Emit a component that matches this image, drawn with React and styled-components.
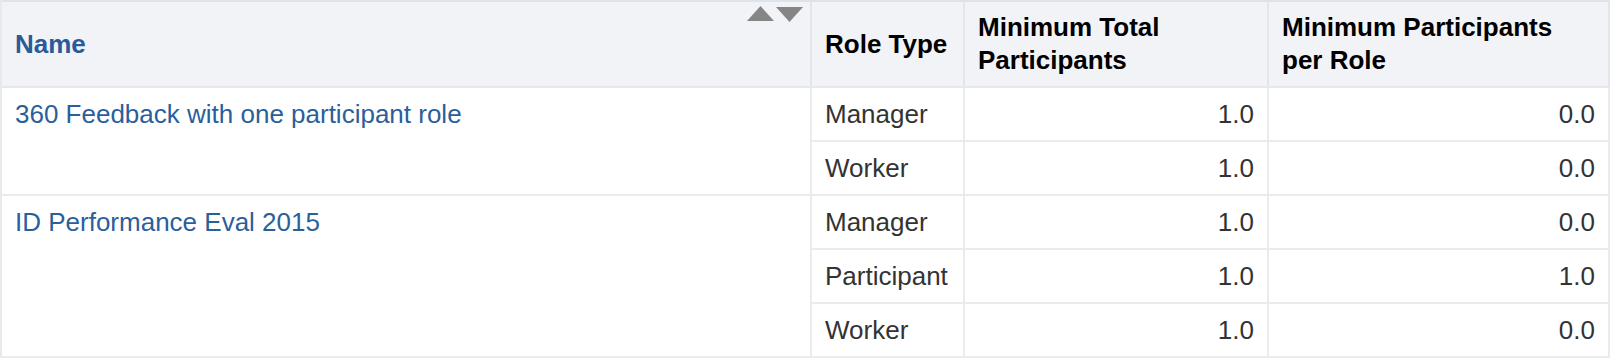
import styled, { createGlobalStyle } from 'styled-components';

const GlobalStyle = createGlobalStyle`
  body {
    margin: 0;
    background: #fff;
    font-family: "Liberation Sans", Arial, Helvetica, sans-serif;
  }
`

const Table = styled.table`
  width: 1610px;
  table-layout: fixed;
  border-collapse: separate;
  border-spacing: 0;
  border-left: 2px solid #e8e9eb;
`
const Head = styled.th`
  position: relative;
  box-sizing: border-box;
  width: ${({ w }) => w}px;
  height: 88px;
  padding: 0 13px;
  text-align: left;
  vertical-align: middle;
  background-color: #f1f3f7;
  border-top: 2px solid #dde3ea;
  border-bottom: 2px solid #e6e8ec;
  border-right: 2px solid #e2e6eb;
  font-size: 26px;
  line-height: 33px;
  font-weight: bold;
  color: ${({ link }) => link ? '#2a5b98' : '#000'};
`
const Cell = styled.td`
  box-sizing: border-box;
  height: 54px;
  padding: 0 13px;
  border-right: 2px solid #ebebeb;
  border-bottom: 2px solid #ebebeb;
  font-size: 26px;
  line-height: 30px;
  color: #333;
  text-align: ${({ num }) => num ? 'right' : 'left'};
  vertical-align: middle;
  white-space: nowrap;
`
const NameCell = styled(Cell)`
  vertical-align: top;
  padding-top: 11px;
`
const Link = styled.a`
  color: #2b5f9c;
  text-decoration: none;
`
const SortArrows = styled.div`
  position: absolute;
  top: 4px;
  right: 7px;
  display: flex;
  gap: 2px;
`

const Arrow = ({ down }) => (
  <svg width="27" height="16" viewBox="0 0 27 16">
    <polygon points={down ? '0,1 27,1 13.5,16' : '0,15 27,15 13.5,0'} fill="#858585" />
  </svg>
)

const templates = [
  {
    name: '360 Feedback with one participant role',
    roles: [
      { role: 'Manager', total: '1.0', perRole: '0.0' },
      { role: 'Worker', total: '1.0', perRole: '0.0' },
    ],
  },
  {
    name: 'ID Performance Eval 2015',
    roles: [
      { role: 'Manager', total: '1.0', perRole: '0.0' },
      { role: 'Participant', total: '1.0', perRole: '1.0' },
      { role: 'Worker', total: '1.0', perRole: '0.0' },
    ],
  },
]

const App = () => {
  return (
    <>
      <GlobalStyle />
      <Table>
        <thead>
          <tr>
            <Head w={810} link>
              Name
              <SortArrows>
                <Arrow />
                <Arrow down />
              </SortArrows>
            </Head>
            <Head w={153}>Role Type</Head>
            <Head w={304}>Minimum Total Participants</Head>
            <Head w={341}>Minimum Participants per Role</Head>
          </tr>
        </thead>
        <tbody>
          {templates.map(({ name, roles }) => (
            roles.map(({ role, total, perRole }, i) => (
              <tr key={name + role}>
                {i === 0 && (
                  <NameCell rowSpan={roles.length}>
                    <Link href="#">{name}</Link>
                  </NameCell>
                )}
                <Cell>{role}</Cell>
                <Cell num>{total}</Cell>
                <Cell num>{perRole}</Cell>
              </tr>
            ))
          ))}
        </tbody>
      </Table>
    </>
  )
}

export default App;
